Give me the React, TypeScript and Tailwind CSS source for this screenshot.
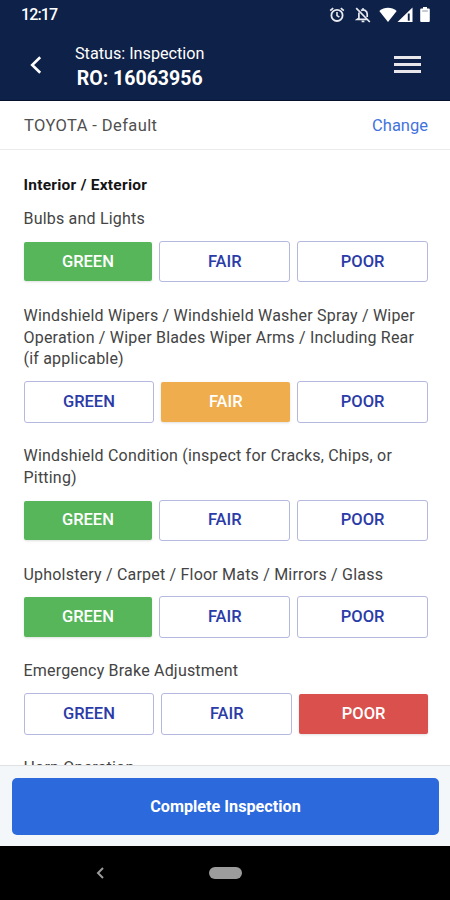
import React from 'react';
import clsx from 'clsx';

type Rating = 'GREEN' | 'FAIR' | 'POOR';

type InspectionItem = {
  name: string;
  rating: Rating | null;
};

const RATINGS: Rating[] = ['GREEN', 'FAIR', 'POOR'];

const SELECTED: Record<Rating, string> = {
  GREEN: 'bg-[#57b65a]',
  FAIR: 'bg-[#efad4d]',
  POOR: 'bg-[#d9504d]',
};

const initialItems: InspectionItem[] = [
  { name: 'Bulbs and Lights', rating: 'GREEN' },
  {
    name: 'Windshield Wipers / Windshield Washer Spray / Wiper Operation / Wiper Blades Wiper Arms / Including Rear (if applicable)',
    rating: 'FAIR',
  },
  {
    name: 'Windshield Condition (inspect for Cracks, Chips, or Pitting)',
    rating: 'GREEN',
  },
  {
    name: 'Upholstery / Carpet / Floor Mats / Mirrors / Glass',
    rating: 'GREEN',
  },
  { name: 'Emergency Brake Adjustment', rating: 'POOR' },
  { name: 'Horn Operation', rating: null },
];

function StatusBar() {
  return (
    <div className="flex h-[29px] items-center justify-between pr-[19px] pl-[21px]">
      <span className="pt-px text-[16px] leading-none font-medium tracking-[-0.9px]">
        12:17
      </span>
      <div className="flex items-center">
        {/* alarm */}
        <svg className="h-4 w-4" viewBox="0 0 16 16" fill="none" stroke="#e9ebf0">
          <circle cx="8" cy="8.4" r="5.6" strokeWidth="1.8" />
          <path d="M8 5v3.6l2.4 1.6" strokeWidth="1.6" />
          <path d="M1.2 3.7l3-2.6M14.8 3.7l-3-2.6" strokeWidth="1.7" />
        </svg>
        {/* muted bell */}
        <svg
          className="ml-[10px] h-4 w-4"
          viewBox="0 0 16 16"
          fill="none"
          stroke="#e9ebf0"
          strokeWidth="1.7"
        >
          <path d="M1.2 1.2l13.6 13.8" />
          <path d="M6 3.4c3-1.6 6.2.6 6.2 3.6v3M3.9 5.6v5.6l-1.6 1.2h9.6" />
          <path d="M8 1.2v1.4" strokeWidth="2" />
          <path d="M6.6 14.4h2.8" />
        </svg>
        {/* wifi */}
        <svg className="ml-[8px] h-4 w-[18px]" viewBox="0 0 18 16" fill="#fff">
          <path d="M9 15L.3 4C5.4-.4 12.6-.4 17.7 4z" />
        </svg>
        {/* cell signal */}
        <svg className="mr-px h-4 w-4" viewBox="0 0 16 16">
          <path d="M.5 15L15.5.5V15z" fill="#fff" />
          <path d="M10.8 6.5h1.9v7.2h-1.9z" fill="#0e2148" />
        </svg>
        {/* battery */}
        <svg className="mr-px ml-[6px] h-4 w-[10px]" viewBox="0 0 10 16">
          <path
            d="M3 0h4v1.6h1.800q1 0 1 1v11.400q0 1-1 1H1.200q-1 0-1-1V2.600q0-1 1-1H3z"
            fill="#fff"
          />
          <path d="M2.2 3.5h5.6v1H2.200z" fill="#8b93a8" />
        </svg>
      </div>
    </div>
  );
}

function Header() {
  return (
    <header className="h-[101px] shrink-0 border-b border-[#060f2b] bg-[#0e2148] text-white">
      <StatusBar />
      <div className="flex h-[71px] items-center justify-between pr-[29px] pl-[30px]">
        <div className="flex items-center">
          <button type="button" aria-label="Back">
            <svg
              className="h-[18px] w-3"
              viewBox="0 0 12 18"
              fill="none"
              stroke="#fff"
              strokeWidth="2.6"
            >
              <path d="M10.2 1.2L2.2 9l8 7.8" />
            </svg>
          </button>
          <div className="ml-[33px] flex flex-col items-center pt-[5px]">
            <div className="text-[16.2px] leading-[22px] whitespace-nowrap">
              Status: Inspection
            </div>
            <div className="text-[19.5px] leading-[27px] font-bold whitespace-nowrap">
              RO: 16063956
            </div>
          </div>
        </div>
        <button
          type="button"
          aria-label="Menu"
          className="flex w-[27px] flex-col gap-[4px]"
        >
          <span className="h-[3px] bg-[#e8e8ec]" />
          <span className="h-[3px] bg-[#e8e8ec]" />
          <span className="h-[3px] bg-[#e8e8ec]" />
        </button>
      </div>
    </header>
  );
}

function RatingRow({
  value,
  onChange,
}: {
  value: Rating;
  onChange: (r: Rating) => void;
}) {
  return (
    <div className="flex items-center gap-[7px]">
      {RATINGS.map((r) => (
        <button
          key={r}
          type="button"
          onClick={() => onChange(r)}
          className={clsx(
            'box-content flex h-[39.5px] flex-1 items-center justify-center text-[16.5px] font-medium',
            value === r
              ? ['rounded-[2px] text-white shadow-sm', SELECTED[r]]
              : 'rounded-[3px] border border-[#b5b8df] text-[#2b3ba8]',
          )}
        >
          <span className="pt-px">{r}</span>
        </button>
      ))}
    </div>
  );
}

export default function App() {
  const [items, setItems] = React.useState(initialItems);

  const rate = (name: string, rating: Rating) =>
    setItems((prev) =>
      prev.map((it) => (it.name === name ? { ...it, rating } : it)),
    );

  return (
    <div className="flex h-[900px] w-[450px] flex-col overflow-hidden bg-white font-['Roboto',sans-serif]">
      <Header />

      <div className="flex h-[49px] shrink-0 items-center justify-between border-b border-[#ebebeb] pt-0.5 pr-[22px] pl-6 text-[16.5px]">
        <span className="tracking-[0.4px] text-[#505050]">
          TOYOTA - Default
        </span>
        <button type="button" className="text-[#4373dc]">
          Change
        </button>
      </div>

      <main className="min-h-0 flex-1 overflow-hidden pt-6 pr-[22px] pl-[23.5px]">
        <h2 className="mb-3 text-[15.5px] leading-[22px] font-bold tracking-[0.25px] text-[#151515]">
          Interior / Exterior
        </h2>
        {items.map((item) => (
          <section key={item.name} className="mb-[22.5px]">
            <p className="mb-[11px] text-[16px] leading-[21.75px] tracking-[0.2px] text-[#444]">
              {item.name}
            </p>
            {item.rating && (
              <RatingRow
                value={item.rating}
                onChange={(r) => rate(item.name, r)}
              />
            )}
          </section>
        ))}
      </main>

      <footer className="h-[81px] shrink-0 border-t border-[#dfe1e3] bg-[#f4f7f9] pt-[11.5px] pr-[11px] pl-3">
        <button
          type="button"
          className="h-[57px] w-full rounded-[5px] bg-[#2c69dd] pt-0.5 text-[16.2px] font-bold text-white"
        >
          Complete Inspection
        </button>
      </footer>

      <nav className="grid h-[54px] shrink-0 grid-cols-[200px_50px_200px] items-center justify-items-center bg-black">
        <button type="button" aria-label="System back">
          <svg
            className="h-3 w-2"
            viewBox="0 0 8 12"
            fill="none"
            stroke="#9a9a9a"
            strokeWidth="2"
          >
            <path d="M7 1L2 6l5 5" />
          </svg>
        </button>
        <span className="h-3 w-[33px] rounded-full bg-[#9c9c9c]" />
      </nav>
    </div>
  );
}
